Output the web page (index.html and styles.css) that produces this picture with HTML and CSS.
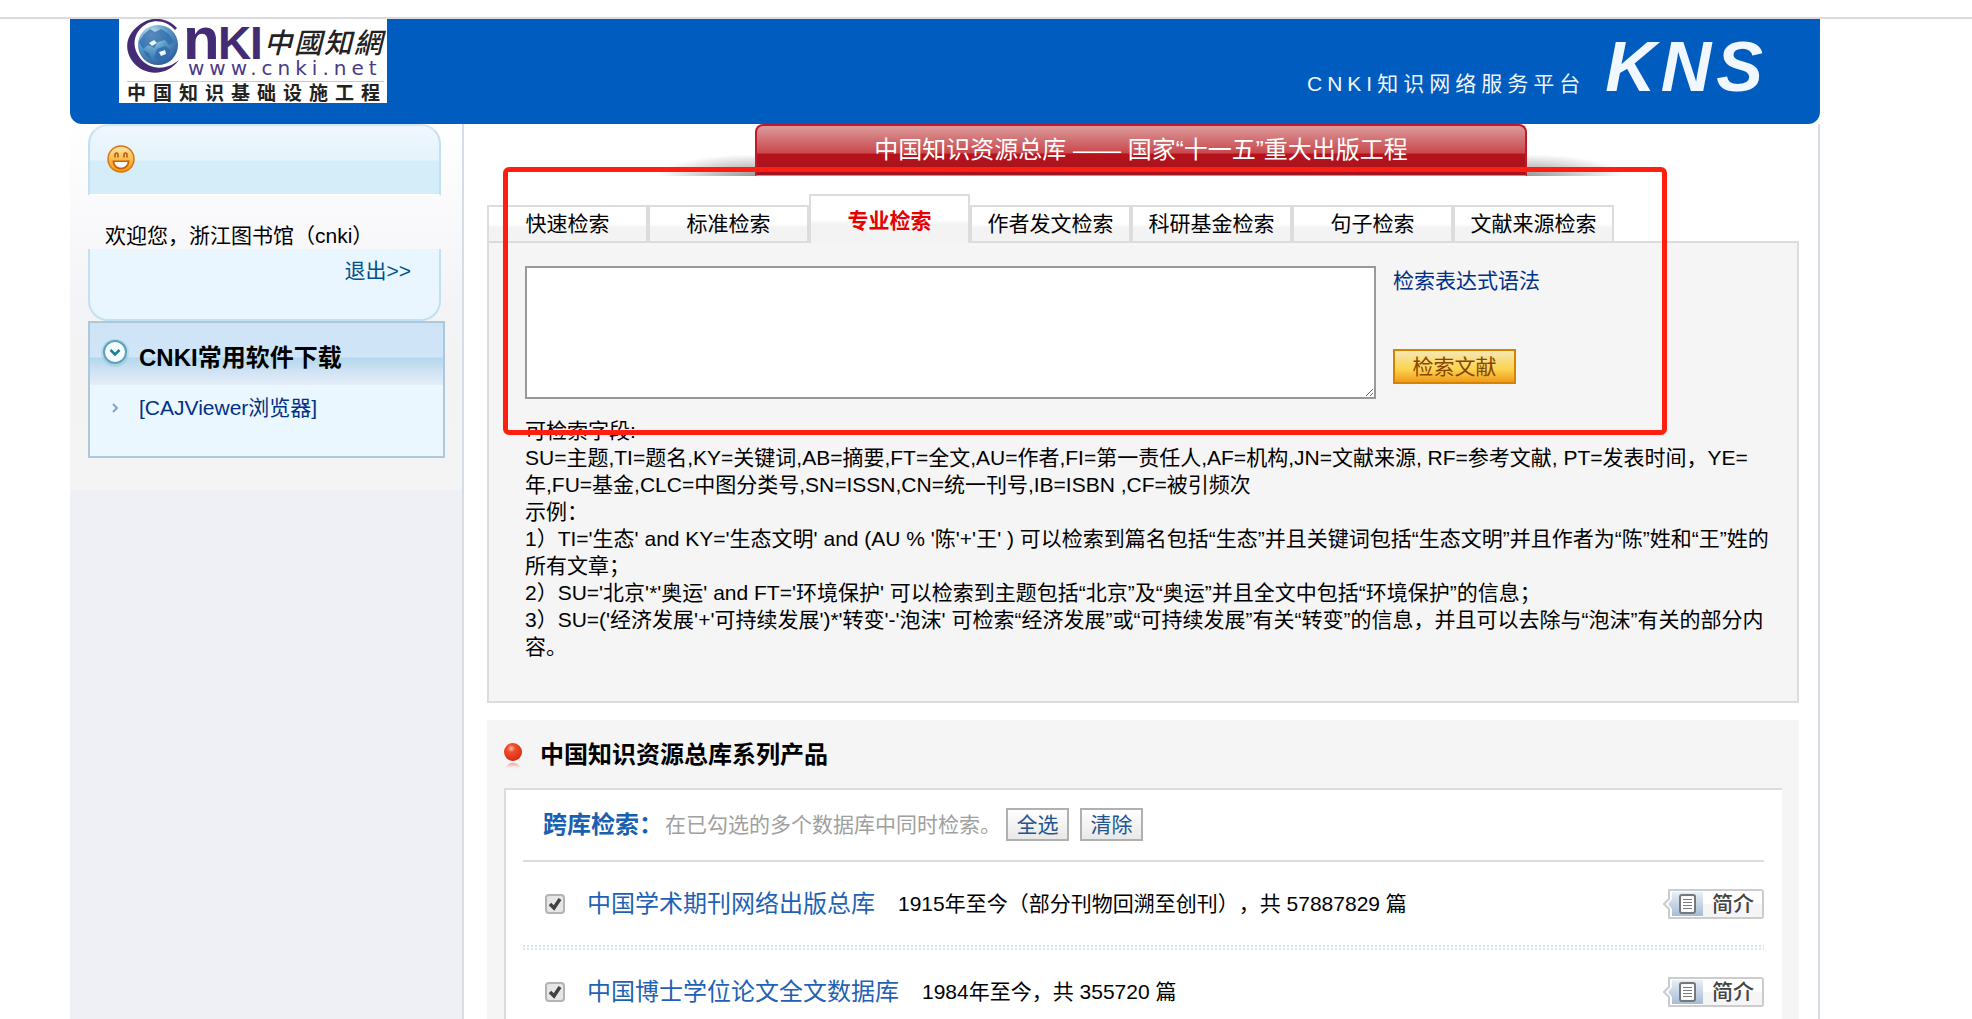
FILE: index.html
```html
<!DOCTYPE html>
<html lang="zh-CN">
<head>
<meta charset="utf-8">
<title>中国知识资源总库</title>
<link rel="stylesheet" href="styles.css">
</head>
<body>
<div class="page">
  <header class="header">
    <svg class="logo" width="268" height="84" viewBox="0 0 268 84" role="img" aria-label="CNKI 中国知网">
      <defs>
        <radialGradient id="globe" cx="0.35" cy="0.25" r="0.9">
          <stop offset="0" stop-color="#d8ecf6"/><stop offset="0.4" stop-color="#5f9fcb"/><stop offset="1" stop-color="#1c4d92"/>
        </radialGradient>
        <linearGradient id="tile" x1="0" y1="0" x2="0" y2="1"><stop offset="0" stop-color="#e8eff6"/><stop offset="1" stop-color="#a5bcd6"/></linearGradient>
        <symbol id="intro-icon" viewBox="0 0 40 30">
          <path d="M41 1H6v9l-5 5 5 5v9h35" fill="#fff" stroke="#ccc" stroke-width="2"/>
          <path d="M9 3h31v24H9v-7l-4-5 4-5z" fill="url(#tile)"/>
          <rect x="17" y="6" width="15" height="18" rx="2" fill="#fff" stroke="#777" stroke-width="2"/>
          <path d="M20 10.500h9M20 13.500h9M20 16.500h9M20 19.500h9" stroke="#777"/>
        </symbol>
      </defs>
      <rect width="268" height="84" fill="#fff"/>
      <path d="M58 9C50 0 36-3 25 3 8 12 3 29 14 43c11 14 34 15 46-2-13 11-30 10-39-2C10 25 17 10 29 4c10-4 20-1 27 7z" fill="#432c74"/>
      <circle cx="39" cy="26" r="20" fill="url(#globe)"/>
      <path d="M25 15l6-5 5 3 6-3 8 5 5 8-5 3-4-5-7 2-4 6-6-3-5 4-4-7zM38 30l8-3 6 4-4 8-7 4-6-5zM24 31l6 3 3 7-6-4z" fill="#2e6aa9" opacity=".75"/>
      <path d="M40 33l6-2 1 4-5 2zM30 24l5-3 3 3-5 3z" fill="#eef7fb"/>
      <g class="logo-name">
        <text class="logo-n" x="64" y="40">n</text>
        <text x="99" y="40">K</text>
        <text x="131" y="40">I</text>
      </g>
      <text class="logo-script" x="145" y="34">中國知網</text>
      <text class="logo-url" x="69" y="56">www.cnki.net</text>
      <path d="M8 62.500H265" stroke="#c9c9c9"/>
      <text class="logo-sub" x="8" y="81">中国知识基础设施工程</text>
    </svg>
    <div class="brand"><span class="brand-name">CNKI知识网络服务平台</span><span class="brand-mark">KNS</span></div>
  </header>

  <div class="columns">
    <aside class="sidebar">
      <section class="welcome">
        <div class="welcome-top">
          <svg width="28" height="28" viewBox="0 0 28 28" aria-hidden="true">
            <defs><linearGradient id="face" x1="0" y1="0" x2="0" y2="1"><stop offset="0" stop-color="#ffe7b0"/><stop offset="0.5" stop-color="#fbbd4a"/><stop offset="1" stop-color="#f59a00"/></linearGradient></defs>
            <circle cx="14" cy="14" r="13" fill="url(#face)" stroke="#dd7416" stroke-width="1.500"/>
            <path d="M8 12.500V10q0-2 1.500-2T11 10v2.500M17 12.500V10q0-2 1.500-2T20 10v2.500" fill="none" stroke="#b85a14" stroke-width="1.600"/>
            <path d="M5.500 15.500h17c0 5-3.500 9-8.500 9s-8.500-4-8.500-9z" fill="#c95e12"/>
            <path d="M7.500 17h13c-.3 3-2.500 5.500-6.500 5.500S7.800 20 7.500 17z" fill="#fff"/>
          </svg>
        </div>
        <p class="welcome-text">欢迎您，浙江图书馆（cnki）</p>
        <div class="welcome-bottom"><a href="#">退出&gt;&gt;</a></div>
      </section>
      <section class="software">
        <h2>
          <svg width="32" height="32" viewBox="0 0 32 32" aria-hidden="true">
            <circle cx="16" cy="17" r="14" fill="#8dbbd0" opacity=".35"/>
            <circle cx="16" cy="16" r="11" fill="#f6fcff" stroke="#5aa3b8" stroke-width="2"/>
            <path d="M11.500 14l4.500 4.500 4.500-4.500" fill="none" stroke="#1c7c92" stroke-width="2.500"/>
          </svg>
          CNKI常用软件下载
        </h2>
        <ul>
          <li><svg width="8" height="10" viewBox="0 0 8 10" aria-hidden="true"><path d="M1 1l4 4-4 4" fill="none" stroke="#7d9ccf" stroke-width="1.800"/></svg><a href="#">[CAJViewer浏览器]</a></li>
        </ul>
      </section>
    </aside>

    <main class="main">
      <div class="ribbon"><h1>中国知识资源总库 —— 国家“十一五”重大出版工程</h1></div>

      <nav class="tabs">
        <a href="#">快速检索</a>
        <a href="#">标准检索</a>
        <a href="#" class="active" aria-current="page">专业检索</a>
        <a href="#">作者发文检索</a>
        <a href="#">科研基金检索</a>
        <a href="#">句子检索</a>
        <a href="#">文献来源检索</a>
      </nav>

      <section class="search">
        <form class="search-form">
          <textarea aria-label="检索表达式"></textarea>
          <div class="search-side">
            <a href="#">检索表达式语法</a>
            <button type="button">检索文献</button>
          </div>
        </form>
        <p class="help">可检索字段:<br>
SU=主题,TI=题名,KY=关键词,AB=摘要,FT=全文,AU=作者,FI=第一责任人,AF=机构,JN=文献来源, RF=参考文献, PT=发表时间，YE=<br>年,FU=基金,CLC=中图分类号,SN=ISSN,CN=统一刊号,IB=ISBN ,CF=被引频次<br>
示例：<br>
1）TI='生态' and KY='生态文明' and (AU % '陈'+'王' ) 可以检索到篇名包括“生态”并且关键词包括“生态文明”并且作者为“陈”姓和“王”姓的<br>所有文章；<br>
2）SU='北京'*'奥运' and FT='环境保护' 可以检索到主题包括“北京”及“奥运”并且全文中包括“环境保护”的信息；<br>
3）SU=('经济发展'+'可持续发展')*'转变'-'泡沫' 可检索“经济发展”或“可持续发展”有关“转变”的信息，并且可以去除与“泡沫”有关的部分内<br>容。</p>
      </section>

      <section class="products">
        <h2>
          <svg width="18" height="28" viewBox="0 0 18 28" aria-hidden="true">
            <defs>
              <radialGradient id="ball" cx="0.4" cy="0.3" r="0.7"><stop offset="0" stop-color="#ffc0a8"/><stop offset="0.3" stop-color="#f0502e"/><stop offset="1" stop-color="#d62a12"/></radialGradient>
              <linearGradient id="echo" x1="0" y1="0" x2="0" y2="1"><stop offset="0" stop-color="#e8604a" stop-opacity=".6"/><stop offset="1" stop-color="#fff" stop-opacity="0"/></linearGradient>
            </defs>
            <circle cx="9" cy="9" r="9" fill="url(#ball)"/>
            <path d="M1 27q1-7 8-7t8 7z" fill="url(#echo)"/>
          </svg>
          中国知识资源总库系列产品
        </h2>
        <div class="card">
          <div class="card-head">
            <h3>跨库检索：</h3>
            <span class="note">在已勾选的多个数据库中同时检索。</span>
            <button type="button">全选</button>
            <button type="button">清除</button>
          </div>
          <ul class="databases">
            <li>
              <input type="checkbox" id="db1" checked aria-label="中国学术期刊网络出版总库">
              <a class="db-name" href="#">中国学术期刊网络出版总库</a>
              <span class="db-info">1915年至今（部分刊物回溯至创刊），共 57887829 篇</span>
              <a class="intro" href="#"><svg width="40" height="30" aria-hidden="true"><use href="#intro-icon"/></svg><span>简介</span></a>
            </li>
            <li>
              <input type="checkbox" id="db2" checked aria-label="中国博士学位论文全文数据库">
              <a class="db-name" href="#">中国博士学位论文全文数据库</a>
              <span class="db-info">1984年至今，共 355720 篇</span>
              <a class="intro" href="#"><svg width="40" height="30" aria-hidden="true"><use href="#intro-icon"/></svg><span>简介</span></a>
            </li>
          </ul>
        </div>
      </section>

      <div class="highlight" aria-hidden="true"></div>
    </main>
  </div>
</div>
</body>
</html>
```
FILE: styles.css
```css
* { box-sizing: border-box; }

body {
  margin: 0;
  height: 100vh;
  overflow: hidden;
  background: #fff;
  color: #000;
  font: 21px/27px "Liberation Sans", Arial, "Noto Sans CJK SC", sans-serif;
  text-spacing-trim: space-all;
}

h1, h2, h3, p, ul { margin: 0; padding: 0; }
ul { list-style: none; }
a { color: #003088; text-decoration: none; }
svg { display: block; flex: none; }
button { font: inherit; padding: 0; }

.page {
  margin-top: 17px;
  border-top: 2px solid #d9d9de;
  padding: 0 152px 0 70px;
  min-height: 100vh;
  display: flex;
  flex-direction: column;
}

/* Header */
.header {
  display: flex;
  justify-content: space-between;
  height: 105px;
  padding: 0 52px 0 49px;
  background: #005cbf;
  border-radius: 0 0 12px 12px;
}
.logo-name { font: bold 46px "Liberation Sans", Arial, sans-serif; fill: #432c74; }
.logo-n { font-size: 60px; }
.logo-script { font: italic 500 28px "Noto Sans CJK TC", sans-serif; letter-spacing: 2px; fill: #222; }
.logo-url { font: 20px "DejaVu Sans", sans-serif; letter-spacing: 5px; fill: #4b3a86; }
.logo-sub { font: bold 19px "Noto Sans CJK SC", sans-serif; letter-spacing: 7px; fill: #222; }
.brand {
  display: flex;
  align-items: baseline;
  gap: 20px;
  color: #f0f7ff;
  line-height: 96px;
}
.brand-name { letter-spacing: 5px; }
.brand-mark { font-size: 70px; font-weight: bold; font-style: italic; letter-spacing: 5px; }

.columns { display: flex; flex: 1; }

/* Sidebar */
.sidebar {
  flex: 0 0 394px;
  padding: 0 17px 0 18px;
  border-right: 2px solid #d6dde4;
  background: linear-gradient(#fff, #f4f4f8 180px, #f3f3f3 240px, #f4f4f4 366px, #eff0f5 366px);
}
.welcome { width: 353px; }
.welcome-top {
  height: 72px;
  padding: 19px 17px;
  border: 2px solid #c3dff2;
  border-top-color: #d3e6f4;
  border-bottom: 2px solid #fff;
  border-radius: 20px 20px 0 0;
  background: linear-gradient(#f0f7fe, #e4f3fc 34px, #d5ecf9 35px);
}
.welcome-text { padding: 26px 0 0 17px; height: 53px; }
.welcome-bottom {
  height: 72px;
  padding: 8px 28px;
  border: 2px solid #c3dff2;
  border-top: 0;
  border-radius: 0 0 20px 20px;
  background: #e9f6ff;
  text-align: right;
}
.welcome-bottom a { color: #00508c; }
.software {
  width: 357px;
  height: 137px;
  border: 2px solid #adc8da;
  background: #eaf7ff;
}
.software h2 {
  display: flex;
  align-items: center;
  gap: 8px;
  height: 62px;
  padding: 6px 0 0 9px;
  background: linear-gradient(#cfe3f7, #d0e5f8 34px, #b3d8ed 35px, #cfe2f4 48px, #e4eef8);
  font-size: 24px;
}
.software h2 svg { margin-bottom: 10px; }
.software li { display: flex; align-items: center; gap: 19px; padding: 9px 0 0 22px; }

/* Main column */
.main {
  position: relative;
  flex: 1;
  min-width: 0;
  padding: 0 19px 0 23px;
  border-right: 2px solid #d6dde4;
}
.ribbon {
  display: flex;
  justify-content: center;
  margin: 0 172px 18px 168px;
  padding: 0 100px;
  background:
    radial-gradient(ellipse at bottom right, #999, #fff0 70%) left bottom / 100px 22px no-repeat,
    radial-gradient(ellipse at bottom left, #999, #fff0 70%) right bottom / 100px 22px no-repeat;
}
.ribbon h1 {
  flex: 0 1 772px;
  height: 52px;
  border: 2px solid #c01a28;
  border-bottom: 1px solid #cf8890;
  border-radius: 8px 8px 0 0;
  background: linear-gradient(#dc9a9c, #c9484c 27px, #b8121c 28px, #a01420);
  color: #fff;
  font-size: 24px;
  font-weight: normal;
  line-height: 48px;
  text-align: center;
  white-space: nowrap;
}
.tabs { display: flex; align-items: flex-end; }
.tabs a {
  flex: 0 0 161px;
  height: 36px;
  border: 2px solid #dcdcdc;
  border-bottom: 0;
  background: linear-gradient(#fff 50%, #f3f3f3 60%);
  color: #000;
  line-height: 34px;
  text-align: center;
}
.tabs .active {
  z-index: 1;
  height: 49px;
  margin-bottom: -2px;
  color: #e60000;
  font-weight: bold;
  line-height: 50px;
}
.search {
  height: 462px;
  padding: 23px 29px 0 36px;
  border: 2px solid #dcdcdc;
  background: #f5f5f5;
}
.search-form { display: flex; gap: 17px; }
.search-form textarea {
  flex: 0 1 851px;
  height: 133px;
  border: 2px solid #999;
  background: #fff;
}
.search-side {
  display: flex;
  flex-direction: column;
  align-items: flex-start;
  justify-content: space-between;
  padding: 1px 0 15px;
}
.search-side button {
  width: 123px;
  height: 35px;
  border: 2px solid #d68400;
  background: linear-gradient(#f5e8b4, #fbd34c 60%, #f19a1c);
  color: #8a4500;
}
.help { margin-top: 18px; white-space: nowrap; }

/* Products */
.products { margin-top: 17px; padding: 0 17px; background: #f5f5f5; }
.products h2 {
  display: flex;
  align-items: center;
  gap: 18px;
  height: 68px;
  font-size: 24px;
}
.products h2 svg { margin-top: 5px; }
.card {
  padding: 0 18px 0 17px;
  border: 2px solid #dcdcdc;
  border-width: 2px 0 0 2px;
  background: #fff;
}
.card-head {
  display: flex;
  align-items: center;
  height: 72px;
  padding: 0 0 2px 20px;
  border-bottom: 2px solid #dcdcdc;
}
.card-head h3 { color: #1a60b0; font-size: 24px; }
.card-head .note { margin-left: 2px; color: #a0a0a0; }
.card-head button {
  width: 63px;
  height: 33px;
  margin-left: 11px;
  border: 2px solid #b0b0b0;
  background: linear-gradient(#fff, #e8e8e8);
  color: #245490;
}
.card-head .note + button { margin-left: 5px; }
.databases li {
  display: flex;
  align-items: center;
  height: 88px;
  padding: 0 0 5px 22px;
  background:
    linear-gradient(#fff0 2px, #fff 2px 3px, #fff0 3px) left bottom / 100% 5px no-repeat,
    repeating-linear-gradient(90deg, #d3e6f2 0 2px, #fff 2px 4px) left bottom / 100% 5px no-repeat;
}
.databases input {
  flex: none;
  appearance: none;
  width: 20px;
  height: 20px;
  margin: 0;
  border: 2px solid #b4b4b4;
  border-radius: 4px;
  background: #e6e6e6 url("data:image/svg+xml,%3Csvg xmlns='http://www.w3.org/2000/svg' viewBox='0 0 16 16'%3E%3Cpath d='M3 8l4 4 6-9' fill='none' stroke='%23404040' stroke-width='3.500'/%3E%3C/svg%3E") center / 16px 16px no-repeat;
}
.db-name { margin: 0 23px 0 22px; color: #1f62b4; font-size: 24px; }
.intro { display: flex; margin-left: auto; width: 101px; height: 30px; }
.intro span {
  flex: 1;
  padding-left: 9px;
  border: 2px solid #ccc;
  border-left: 0;
  border-radius: 0 3px 3px 0;
  background: linear-gradient(#fff 50%, #f5f5f5 50%);
  color: #444;
  font-weight: 500;
  line-height: 26px;
}

/* Annotation frame over the search form */
.highlight {
  position: absolute;
  top: 43px;
  left: 39px;
  right: 151px;
  height: 268px;
  border: 5px solid #ff1e10;
  border-radius: 6px;
  pointer-events: none;
  z-index: 2;
}
```
